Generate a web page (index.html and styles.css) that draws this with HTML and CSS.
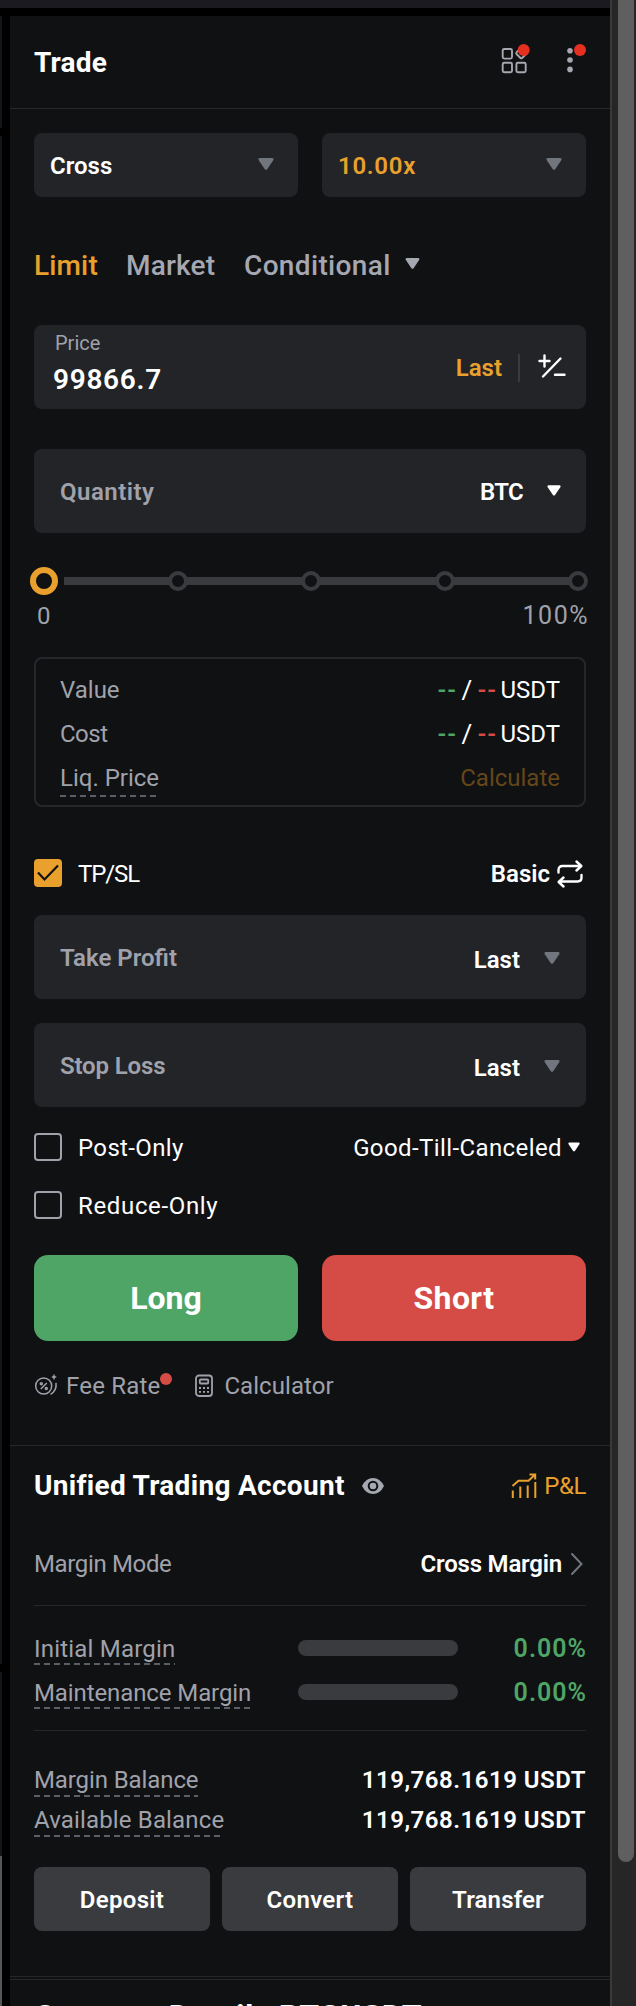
FILE: index.html
```html
<!DOCTYPE html>
<html lang="en">
<head>
<meta charset="utf-8">
<title>Trade</title>
<link rel="stylesheet" href="styles.css">
</head>
<body>
<div class="topbar"></div>
<div class="workspace">
  <aside class="neighbour"><i class="n1"></i><i class="n2"></i><i class="n3"></i><i class="n4"></i></aside>
  <main class="panel">
    <header class="head">
      <h1 class="title"><span class="t-trade">Trade</span></h1>
      <div class="head-icons">
        <svg class="ic-grid" width="30" height="32" viewBox="0 0 30 32" fill="none" stroke="#a5a7b1" stroke-width="1.900">
          <rect x="2.700" y="5" width="9.300" height="9.600" rx="1.500"/><rect x="2.700" y="18.700" width="9.300" height="9.600" rx="1.500"/><rect x="16.400" y="18.700" width="9.300" height="9.600" rx="1.500"/><rect x="17.300" y="5.200" width="8" height="8" rx="1.500" transform="rotate(45 21.300 9.200)"/>
          <circle class="dot" cx="23.700" cy="6" r="6" />
        </svg>
        <svg class="ic-more" width="26" height="32" viewBox="0 0 26 32" fill="#a5a7b1">
          <circle cx="6" cy="6.700" r="2.800"/><circle cx="6" cy="16" r="2.800"/><circle cx="6" cy="25.400" r="2.800"/><circle class="dot" cx="16" cy="6" r="6"/>
        </svg>
      </div>
    </header>

    <section class="order">
      <div class="pair selects">
        <div class="select"><b class="t-cross">Cross</b><svg class="tri dim" viewBox="0 0 16 12"><path d="M1.500 0h13q1.500.5.900 1.900L9.200 11.200q-1.200 1.300-2.400 0L.6 1.900Q0 .5 1.500 0z"/></svg></div>
        <div class="select gold"><b class="t-lev">10.00x</b><svg class="tri dim" viewBox="0 0 16 12"><path d="M1.500 0h13q1.500.5.900 1.900L9.200 11.200q-1.200 1.300-2.400 0L.6 1.900Q0 .5 1.500 0z"/></svg></div>
      </div>
      <nav class="tabs">
        <span class="gold t-limit">Limit</span><span class="t-market">Market</span><span class="t-cond">Conditional</span>
        <svg class="tri tab-tri" viewBox="0 0 16 12"><path d="M1.500 0h13q1.500.5.900 1.900L9.200 11.200q-1.200 1.300-2.400 0L.6 1.900Q0 .5 1.500 0z"/></svg>
      </nav>
      <div class="field price">
        <div class="price-in"><small class="t-price">Price</small><span class="t-amt">99866.7</span></div>
        <div class="price-act"><b class="gold t-lastg">Last</b><i class="vsep"></i>
          <svg width="28" height="28" viewBox="0 0 28 28" fill="none" stroke="#fff" stroke-width="2.400" stroke-linecap="round"><path d="M1.500 7h10M6.500 1.500v11M22.500 4.500L5 22.500M17 20.800h9.500"/></svg>
        </div>
      </div>
      <div class="field qty"><b class="muted t-qty">Quantity</b><span class="end"><b class="t-btc">BTC</b><svg class="tri white" viewBox="0 0 16 12"><path d="M1.500 0h13q1.500.5.900 1.900L9.200 11.200q-1.200 1.300-2.400 0L.6 1.900Q0 .5 1.500 0z"/></svg></span></div>
      <div class="slider"><i class="knob on"></i><i class="rail first"></i><i class="knob"></i><i class="rail"></i><i class="knob"></i><i class="rail"></i><i class="knob"></i><i class="rail"></i><i class="knob"></i></div>
      <div class="scale muted"><span class="t-zero">0</span><span class="t-hund">100%</span></div>
      <div class="summary">
        <div class="line"><span class="muted t-value">Value</span><span class="nums"><span class="green t-dash">--</span><span class="slash">/</span><span class="red t-dash">--</span><span class="t-usdt">USDT</span></span></div>
        <div class="line"><span class="muted t-cost">Cost</span><span class="nums"><span class="green t-dash">--</span><span class="slash">/</span><span class="red t-dash">--</span><span class="t-usdt">USDT</span></span></div>
        <div class="line"><span class="muted dashed liq t-liq">Liq. Price</span><span class="calc t-calc">Calculate</span></div>
      </div>
      <div class="check-row tpsl">
        <span class="box checked"><svg width="28" height="28" viewBox="0 0 28 28" fill="none" stroke="#111214" stroke-width="2.200"><path d="M4 13.500l6.500 7L24 6.500"/></svg></span><span class="t-tpsl">TP/SL</span>
        <span class="end basic"><b class="t-basic">Basic</b><svg width="26" height="28" viewBox="0 0 26 28" fill="none" stroke="#fff" stroke-width="2.400" stroke-linecap="round" stroke-linejoin="round"><path d="M1.500 12.500V10q0-4 4-4H24M19.500 1.500L24.300 6l-4.800 4.500M24.500 15v2.500q0 4-4 4H2M6.500 17.500L1.700 22l4.800 4.500"/></svg></span>
      </div>
      <div class="field trig"><b class="muted t-tp">Take Profit</b><span class="end low"><b class="t-last">Last</b><svg class="tri dim" viewBox="0 0 16 12"><path d="M1.500 0h13q1.500.5.900 1.900L9.200 11.200q-1.200 1.300-2.400 0L.6 1.900Q0 .5 1.500 0z"/></svg></span></div>
      <div class="field trig sl"><b class="muted t-sl">Stop Loss</b><span class="end low"><b class="t-last">Last</b><svg class="tri dim" viewBox="0 0 16 12"><path d="M1.500 0h13q1.500.5.900 1.900L9.200 11.200q-1.200 1.300-2.400 0L.6 1.900Q0 .5 1.500 0z"/></svg></span></div>
      <div class="check-row post"><span class="box"></span><span class="t-post">Post-Only</span><span class="end gtc"><span class="t-gtc">Good-Till-Canceled</span><svg class="tri white small" viewBox="0 0 16 12"><path d="M1.500 0h13q1.500.5.900 1.900L9.200 11.200q-1.200 1.300-2.400 0L.6 1.900Q0 .5 1.500 0z"/></svg></span></div>
      <div class="check-row reduce"><span class="box"></span><span class="t-reduce">Reduce-Only</span></div>
      <div class="pair actions"><button class="long"><span class="t-long">Long</span></button><button class="short"><span class="t-short">Short</span></button></div>
      <div class="tools muted">
        <svg width="24" height="28" viewBox="0 0 24 28" fill="none" stroke="#a0a2ab" stroke-width="1.500"><circle cx="9.700" cy="14" r="8"/><path d="M16.500 22.300q6.500-3.800 5.500-11.500" stroke-width="1.500"/><path d="M6.800 17l6-6"/><circle cx="7.300" cy="11.700" r="1"/><circle cx="12.300" cy="16.500" r="1"/><path d="M20 1.800q.4 2.800 2.800 3.200-2.400.4-2.800 3.200-.4-2.800-2.800-3.200 2.400-.4 2.800-3.200z" fill="#a0a2ab" stroke="none"/></svg>
        <span class="t-fee">Fee Rate</span><i class="fee-dot"></i>
        <svg class="ic-calc" width="18" height="24" viewBox="0 0 18 24" fill="none" stroke="#a0a2ab" stroke-width="1.800"><rect x="1" y="1.500" width="16" height="20.500" rx="3"/><rect x="4.800" y="5.500" width="8.400" height="4" rx="1"/><path d="M4 14h10M4 17.800h10" stroke-dasharray="2 2"/></svg>
        <span class="t-calcr">Calculator</span>
      </div>
    </section>

    <section class="account">
      <div class="acc-head"><h2 class="title"><span class="t-uta">Unified Trading Account</span></h2>
        <svg class="eye" width="22" height="16" viewBox="0 0 22 16"><path fill="#a5a7b1" d="M0 8Q4 0 11 0t11 8q-4 8-11 8T0 8z"/><circle cx="11" cy="8" r="4.300" fill="#a5a7b1" stroke="#101113" stroke-width="2"/></svg>
        <span class="pnl"><svg width="26" height="26" viewBox="0 0 26 26" fill="none" stroke="#e9a02c" stroke-width="2"><path d="M1.800 25v-7.500M9.300 25V13.500M16.700 25V12.500M24.300 25V9M1.500 13l6-5.200h10l6.500-6M18.500 1.500h5.700v5"/></svg><span class="t-pnl">P&amp;L</span></span>
      </div>
      <div class="mode"><span class="muted t-mm">Margin Mode</span><span class="end"><b class="t-cm">Cross Margin</b><svg width="14" height="24" viewBox="0 0 14 24" fill="none" stroke="#71757e" stroke-width="2" stroke-linecap="round"><path d="M2 2l9.500 10L2 22"/></svg></span></div>
      <div class="margins">
        <div class="mrow"><span class="muted dashed t-im">Initial Margin</span><i class="bar"></i><b class="green t-pct">0.00%</b></div>
        <div class="mrow"><span class="muted dashed t-mtm">Maintenance Margin</span><i class="bar"></i><b class="green t-pct">0.00%</b></div>
      </div>
      <div class="balances">
        <div class="brow"><span class="muted dashed t-mb">Margin Balance</span><b class="t-bal">119,768.1619 USDT</b></div>
        <div class="brow"><span class="muted dashed t-ab">Available Balance</span><b class="t-bal">119,768.1619 USDT</b></div>
      </div>
      <div class="trio"><button><span class="t-dep">Deposit</span></button><button><span class="t-conv">Convert</span></button><button><span class="t-trans">Transfer</span></button></div>
    </section>
    <section class="contract"><h2 class="title"><span class="t-cd">Contract Details BTCUSDT</span></h2></section>
  </main>
  <div class="scroll"><i class="thumb"></i></div>
</div>
</body>
</html>
```

FILE: styles.css
```css
* { box-sizing: border-box; }
html, body { margin: 0; height: 2006px; overflow: hidden; }
body { background: #000; color: #fff; font: 400 24px/32px Roboto, "Noto Sans", sans-serif; width: 636px; display: grid; grid-template: 8px 1998px / 610px 26px; }
i, svg { display: block; flex: none; }
span, b, small { white-space: nowrap; }
b { font-weight: 600; }
h1, h2 { margin: 0; }
button { border: 0; padding: 0; margin: 0; color: #fff; font: 600 24px/32px Roboto, "Noto Sans", sans-serif; display: flex; align-items: center; justify-content: center; }
.topbar { background: #1a1a20; }
.workspace { display: contents; }
.neighbour { grid-column: 1; grid-row: 2; width: 2px; display: flex; flex-direction: column; gap: 8px; padding-top: 8px; }
.n1 { height: 112px; background: #151618; }
.n2 { height: 1528px; background: #151618; }
.n3 { height: 184px; background: #151618; margin-bottom: -8px; }
.n4 { height: 150px; background: #55565a; }
.panel { grid-column: 1; grid-row: 2; margin: 8px 0 0 10px; width: 600px; height: 1990px; background: #101113; overflow: hidden; }
.scroll { grid-column: 2; grid-row: 1 / 3; background: #262626; border-left: 2px solid #393939; padding-left: 6px; }
.thumb { width: 16px; height: 1862px; background: #5f5f5f; border-radius: 0 0 8px 8px; }

.title { font-size: 28px; font-weight: 700; line-height: 36px; }
.muted { color: #a0a2ab; }
.gold { color: #e9a02c; }
.green { color: #4ea566; }
.red { color: #d54b45; }
.dot { fill: #e5301f; stroke: none; }
.tri { width: 16px; height: 12px; fill: #fff; }
.tri.dim { fill: #71757e; }
.end { display: flex; align-items: center; margin-left: auto; }

/* Per-label tracking */
.t-trade { letter-spacing: .2px; }
.t-lev { letter-spacing: .7px; }
.t-cross { letter-spacing: 0; }
.t-amt { letter-spacing: .7px; }
.t-qty { letter-spacing: .5px; }
.t-btc { letter-spacing: -.7px; }
.t-hund { font-size: 25px; letter-spacing: 1.5px; }
.t-cost { letter-spacing: -.5px; }
.t-tpsl { letter-spacing: -1.1px; }
.t-tp { letter-spacing: 0; }
.t-sl { letter-spacing: -.15px; }
.t-post { letter-spacing: .35px; }
.t-gtc { letter-spacing: .4px; }
.t-reduce { letter-spacing: .65px; }
.t-short { letter-spacing: .4px; }
.t-fee { letter-spacing: .2px; }
.t-calcr { letter-spacing: .05px; }
.t-uta { letter-spacing: .3px; }
.t-pnl { letter-spacing: -.4px; }
.t-mm { letter-spacing: -.35px; }
.t-cm { letter-spacing: -.2px; }
.t-im { letter-spacing: .2px; }
.t-mtm { letter-spacing: -.1px; }
.t-mb { letter-spacing: -.1px; }
.t-ab { letter-spacing: .15px; }
.t-bal { letter-spacing: .5px; }
.t-pct { font-size: 25px; letter-spacing: 1px; margin-right: -1px; }
.t-dep, .t-conv { letter-spacing: .3px; }
.t-trans { letter-spacing: .15px; }

.head { height: 93px; border-bottom: 1px solid #25272b; padding: 1px 20px 0 24px; display: flex; align-items: center; }
.head-icons { display: flex; margin-left: auto; gap: 34px; margin-top: -5px; }
.head-icons svg { overflow: visible; }
.order { height: 1336px; padding: 24px 24px 0; }
.pair { display: grid; grid-template-columns: 1fr 1fr; gap: 24px; }
.select { height: 64px; border-radius: 8px; background: #232428; padding: 1px 24px 0 16px; display: flex; align-items: center; justify-content: space-between; }
.select .tri { margin-top: -3px; }
.tabs { display: flex; align-items: center; height: 36px; margin-top: 51px; font-size: 28px; font-weight: 500; color: #a5a7b1; }
.t-limit { width: 92px; letter-spacing: .15px; }
.t-market { width: 118px; letter-spacing: .2px; }
.t-cond { width: 161px; letter-spacing: .35px; }
.tab-tri { width: 15px; height: 11px; fill: #a5a7b1; margin-top: -5px; }
.field { height: 84px; border-radius: 8px; background: #232428; padding: 0 24px 0 26px; display: flex; align-items: center; }
.price { margin-top: 41px; padding: 1px 20px 0 19px; }
.price-in { display: flex; flex-direction: column; }
.price-in small { font-size: 20px; line-height: 24px; color: #a0a2ab; padding-left: 2px; margin-top: -1px; }
.t-amt { font-size: 28px; font-weight: 600; line-height: 48px; padding-top: 1px; }
.price-act { margin-left: auto; display: flex; align-items: center; }
.vsep { width: 2px; height: 28px; background: #393b40; margin: 0 18px 0 16px; }
.qty { margin-top: 40px; padding-top: 1px; }
.qty .tri { width: 14px; height: 11px; margin: -3px 1px 0 24px; }
.slider { display: flex; align-items: center; height: 28px; margin: 34px -2px 0 -4px; }
.knob { width: 20px; height: 20px; border: 4px solid #393b3f; border-radius: 50%; }
.knob.on { width: 28px; height: 28px; border: 6px solid #e9a02c; }
.rail { flex: 1; height: 8px; margin: 0 -1px; background: #393b3f; }
.rail.first { flex: none; width: 105px; margin-left: 6px; }
.scale { display: flex; justify-content: space-between; margin: 5px -3px 0 0; padding-left: 3px; }
.summary { height: 150px; margin-top: 25px; border: 2px solid #25272b; border-radius: 8px; padding: 9px 24px 0; }
.line { display: flex; justify-content: space-between; align-items: center; height: 44px; }
.nums { display: flex; }
.t-dash { width: 18px; font-size: 24px; font-weight: 600; letter-spacing: 1px; }
.slash { width: 10px; margin: 0 6px; font-size: 26px; }
.t-usdt { margin-left: 5px; }
.dashed { position: relative; }
.dashed::after { content: ""; position: absolute; left: 0; right: 0; bottom: -1px; height: 2px; background: repeating-linear-gradient(90deg, #5b5e65 0 6px, transparent 6px 10px); }
.liq::after { bottom: -3px; }
.calc { color: #654619; }
.check-row { display: flex; align-items: center; height: 28px; }
.check-row > span:not(.box) { padding-top: 1px; }
.box { width: 28px; height: 28px; border: 2px solid #a0a2ab; border-radius: 4px; margin-right: 16px; }
.box.checked { border: 0; background: #e9a02c; }
.tpsl { margin-top: 52px; }
.basic { gap: 7px; margin-right: 3px; }
.trig { margin-top: 28px; padding-top: 1px; }
.sl { margin-top: 24px; }
.trig .tri { margin: -4px 2px 0 24px; }
.low { padding-top: 4px; }
.post { margin-top: 26px; }
.tri.small { width: 12px; height: 10px; margin: -2px 6px 0 6px; }
.reduce { margin-top: 30px; }
.actions { margin-top: 36px; }
.actions button { height: 86px; border-radius: 14px; font-size: 32px; font-weight: 700; }
.long { background: #4ea566; }
.short { background: #d54b45; }
.tools { display: flex; align-items: center; height: 32px; margin-top: 29px; }
.tools .t-fee { margin-left: 8px; }
.fee-dot { width: 12px; height: 12px; border-radius: 50%; background: #d54b45; margin: -14px 23px 0 0; }
.ic-calc { margin-right: 11px; }

.account { height: 532px; border-top: 1px solid #25272b; padding: 0 24px; border-bottom: 1px solid #25272b; }
.acc-head { display: flex; align-items: center; height: 80px; }
.eye { margin-left: 17px; }
.pnl { margin-left: auto; display: flex; align-items: center; gap: 7px; color: #e9a02c; }
.mode { display: flex; align-items: center; height: 80px; border-bottom: 1px solid #25272b; padding-bottom: 4px; }
.mode .end { gap: 8px; margin-right: 2px; }
.margins { height: 125px; border-bottom: 1px solid #25272b; padding-top: 20px; }
.mrow { display: grid; grid-template-columns: 264px 160px 1fr; align-items: center; height: 44px; }
.mrow .dashed, .brow .dashed { justify-self: start; }
.mrow .dashed { padding-top: 2px; }
.mrow .dashed::after { bottom: 0; }
.bar { height: 16px; border-radius: 8px; background: #393b3f; }
.mrow b { justify-self: end; padding-top: 2px; }
.balances { padding-top: 29px; }
.brow { display: flex; justify-content: space-between; align-items: center; height: 40px; }
.trio { display: grid; grid-template-columns: repeat(3, 1fr); gap: 12px; margin-top: 27px; }
.trio button { height: 64px; border-radius: 8px; background: #393b3f; padding-top: 1px; }
.contract { margin-top: 2px; border-top: 1px solid #25272b; padding: 18px 24px; }
.contract .title { font-size: 32px; letter-spacing: .35px; }
```
